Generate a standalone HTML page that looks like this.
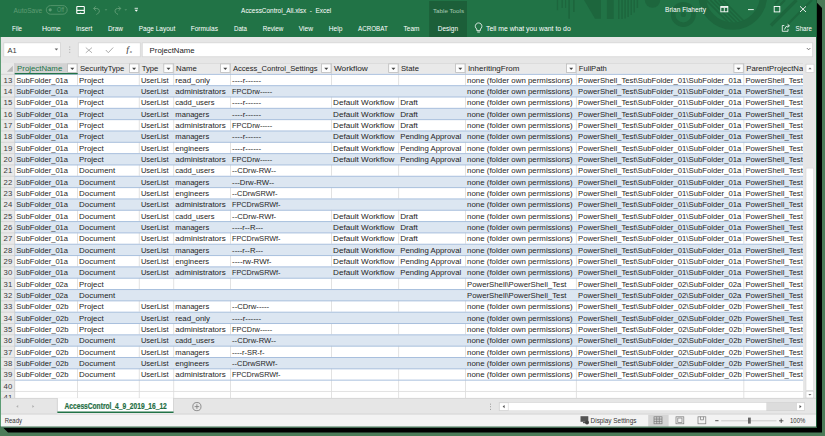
<!DOCTYPE html>
<html><head><meta charset="utf-8"><title>Excel</title>
<style>html,body{margin:0;padding:0;width:825px;height:436px;overflow:hidden;background:#4b7b58}svg{display:block}text{font-family:"Liberation Sans",sans-serif;white-space:pre}</style>
</head><body>
<svg width="825" height="436" viewBox="0 0 825 436">
<rect x="0.00" y="0.00" width="825.00" height="436.00" fill="#4b7b58" />
<polygon points="817,2.7 822,8 822,432.6 8,432.6 3,427.5 817,427.5" fill="#000"/>
<rect x="0.00" y="0.00" width="817.00" height="427.50" fill="#e6e6e6" />
<rect x="0.00" y="0.00" width="816.50" height="37.00" fill="#217346" />
<g fill="#1d663d">
<rect x="556.80" y="0.00" width="1.30" height="10.20" fill="#1d663d" />
<rect x="561.50" y="0.00" width="1.40" height="8.00" fill="#1d663d" />
<rect x="565.00" y="0.00" width="1.10" height="8.00" fill="#1d663d" />
<rect x="568.30" y="0.00" width="1.70" height="18.70" fill="#1d663d" />
<rect x="573.00" y="0.00" width="1.60" height="12.00" fill="#1d663d" />
<rect x="606.90" y="0.00" width="6.80" height="19.00" fill="#1d663d" />
<rect x="618.00" y="0.00" width="1.50" height="19.00" fill="#1d663d" />
<rect x="621.30" y="0.00" width="1.50" height="19.00" fill="#1d663d" />
<rect x="624.40" y="0.00" width="1.50" height="18.50" fill="#1d663d" />
<rect x="627.40" y="0.00" width="1.50" height="17.00" fill="#1d663d" />
<rect x="630.50" y="0.00" width="1.50" height="15.00" fill="#1d663d" />
<rect x="633.50" y="0.00" width="1.50" height="12.50" fill="#1d663d" />
<rect x="636.60" y="0.00" width="1.50" height="8.00" fill="#1d663d" />
<polygon points="584,0 601,0 601,18.7 595,18.7"/>
<path d="M644.8 0 A7.7 7.7 0 0 0 660.2 0z"/>
</g>
<circle cx="683.3" cy="14.5" r="10.2" fill="none" stroke="#1d663d" stroke-width="4.6"/>
<circle cx="683.3" cy="14.5" r="2.6" fill="#1d663d"/>
<path d="M702.2 -4.5 A30.65 30.65 0 0 0 763.5 -4.5" fill="none" stroke="#1d663d" stroke-width="7.3"/>
<defs><clipPath id="arcin"><circle cx="732.9" cy="-4.5" r="27.2"/></clipPath></defs>
<g clip-path="url(#arcin)" stroke="#1d663d" stroke-width="1.6">
<line x1="706.00" y1="0.00" x2="733.00" y2="27.00" stroke="#1d663d" stroke-width="1.6" />
<line x1="710.20" y1="0.00" x2="737.20" y2="27.00" stroke="#1d663d" stroke-width="1.6" />
<line x1="714.40" y1="0.00" x2="741.40" y2="27.00" stroke="#1d663d" stroke-width="1.6" />
<line x1="718.60" y1="0.00" x2="745.60" y2="27.00" stroke="#1d663d" stroke-width="1.6" />
<line x1="722.80" y1="0.00" x2="749.80" y2="27.00" stroke="#1d663d" stroke-width="1.6" />
</g>
<g stroke="#1d663d">
<line x1="796.50" y1="0.00" x2="771.00" y2="25.50" stroke="#1d663d" stroke-width="3.2" />
<line x1="812.00" y1="0.00" x2="787.00" y2="25.00" stroke="#1d663d" stroke-width="2.2" />
<line x1="779.00" y1="0.00" x2="775.00" y2="4.00" stroke="#1d663d" stroke-width="2" />
<line x1="785.00" y1="0.00" x2="780.00" y2="5.00" stroke="#1d663d" stroke-width="2" />
</g>
<text x="13.60" y="13.20" font-size="7.6" fill="#5e9c74" textLength="28.60" lengthAdjust="spacingAndGlyphs" >AutoSave</text>
<rect x="46.30" y="5.60" width="20.90" height="8.60" fill="none" stroke="#5e9c74" stroke-width="0.8" rx="4.3" />
<circle cx="50.2" cy="9.8" r="1.6" fill="#5e9c74"/>
<text x="57.00" y="11.90" font-size="6.6" fill="#5e9c74" textLength="7.00" lengthAdjust="spacingAndGlyphs" >Off</text>
<g fill="none" stroke="#fff" stroke-width="1.1"><rect x="76.8" y="6.5" width="7.5" height="7" rx="0.6"/><path d="M77 10.4 h7.2"/></g><path d="M79.2 13.4 q1.3 -1.6 2.6 0z" fill="#fff"/>
<g fill="none" stroke="#5e9c74" stroke-width="1"><path d="M93.6 8.5 h3.2 a2.6 2.6 0 0 1 1 5 l-1.4 1"/><path d="M95.8 6.3 L93.6 8.5 L95.8 10.7"/><path d="M120.8 8.5 h-3.2 a2.6 2.6 0 0 0 -1 5 l1.4 1"/><path d="M118.6 6.3 L120.8 8.5 L118.6 10.7"/></g>
<path d="M104.6 9.4 h2.8 l-1.4 1.2z M124.4 9.4 h2.8 l-1.4 1.2z" fill="#6aa37f"/>
<path d="M134.6 8.3 h3.4" stroke="#fff" stroke-width="0.8"/><path d="M134.6 9.8 h3.4 l-1.7 2z" fill="#fff"/>
<text x="241.10" y="13.30" font-size="7.6" fill="#fff" textLength="90.20" lengthAdjust="spacingAndGlyphs" >AccessControl_All.xlsx  -  Excel</text>
<rect x="429.20" y="1.00" width="37.80" height="36.00" fill="#1c5f39" />
<text x="433.00" y="12.70" font-size="6.2" fill="#a9cdb5" textLength="31.00" lengthAdjust="spacingAndGlyphs" >Table Tools</text>
<text x="665.00" y="12.30" font-size="7.6" fill="#fff" textLength="41.00" lengthAdjust="spacingAndGlyphs" >Brian Flaherty</text>
<g fill="none" stroke="#fff" stroke-width="0.9"><rect x="720.8" y="6.5" width="7" height="5.3"/><path d="M720.8 7.4 h7 M724.3 8 v3.8"/><path d="M748 9.6 h5.8"/><rect x="774.2" y="6.5" width="5.6" height="5.4"/><path d="M800 6.3 L806 12 M806 6.3 L800 12"/></g>
<text x="12.00" y="30.80" font-size="8.1" fill="#fff" textLength="10.00" lengthAdjust="spacingAndGlyphs" >File</text>
<text x="42.00" y="30.80" font-size="8.1" fill="#fff" textLength="18.70" lengthAdjust="spacingAndGlyphs" >Home</text>
<text x="76.00" y="30.80" font-size="8.1" fill="#fff" textLength="16.30" lengthAdjust="spacingAndGlyphs" >Insert</text>
<text x="108.00" y="30.80" font-size="8.1" fill="#fff" textLength="14.90" lengthAdjust="spacingAndGlyphs" >Draw</text>
<text x="138.70" y="30.80" font-size="8.1" fill="#fff" textLength="36.60" lengthAdjust="spacingAndGlyphs" >Page Layout</text>
<text x="190.70" y="30.80" font-size="8.1" fill="#fff" textLength="27.30" lengthAdjust="spacingAndGlyphs" >Formulas</text>
<text x="234.00" y="30.80" font-size="8.1" fill="#fff" textLength="12.90" lengthAdjust="spacingAndGlyphs" >Data</text>
<text x="262.70" y="30.80" font-size="8.1" fill="#fff" textLength="20.60" lengthAdjust="spacingAndGlyphs" >Review</text>
<text x="298.70" y="30.80" font-size="8.1" fill="#fff" textLength="14.30" lengthAdjust="spacingAndGlyphs" >View</text>
<text x="328.70" y="30.80" font-size="8.1" fill="#fff" textLength="13.70" lengthAdjust="spacingAndGlyphs" >Help</text>
<text x="358.00" y="30.80" font-size="8.1" fill="#fff" textLength="29.70" lengthAdjust="spacingAndGlyphs" >ACROBAT</text>
<text x="403.60" y="30.80" font-size="8.1" fill="#fff" textLength="15.80" lengthAdjust="spacingAndGlyphs" >Team</text>
<text x="437.80" y="30.80" font-size="8.1" fill="#fff" textLength="20.20" lengthAdjust="spacingAndGlyphs" >Design</text>
<text x="486.00" y="30.80" font-size="8.1" fill="#fff" textLength="84.70" lengthAdjust="spacingAndGlyphs" >Tell me what you want to do</text>
<text x="795.60" y="30.80" font-size="8.1" fill="#fff" textLength="16.40" lengthAdjust="spacingAndGlyphs" >Share</text>
<g fill="none" stroke="#fff" stroke-width="0.8"><path d="M476.8 29 a3.3 3.3 0 1 1 3.6 0 v1.6 h-3.6z"/><path d="M477.3 32 h2.6"/></g>
<g fill="none" stroke="#fff" stroke-width="0.8"><path d="M788 29 v2.3 h-5.7 v-5.8 h2"/><path d="M784.5 29.5 q0.5 -3.5 4.5 -3.8 M787.5 24.2 l2 1.6 l-2 1.7"/></g>
<rect x="1.00" y="37.00" width="815.50" height="26.00" fill="#e6e6e6" />
<rect x="3.80" y="42.80" width="56.80" height="14.00" fill="#fff" stroke="#d4d4d4" stroke-width="0.8" />
<text x="7.50" y="52.60" font-size="8" fill="#3a3a3a" textLength="9.20" lengthAdjust="spacingAndGlyphs" >A1</text>
<path d="M54.6 48.6 h3.6 l-1.8 2z" fill="#666"/>
<g fill="#9a9a9a"><rect x="69.3" y="46.6" width="0.9" height="0.9"/><rect x="69.3" y="49.2" width="0.9" height="0.9"/><rect x="69.3" y="51.8" width="0.9" height="0.9"/></g>
<rect x="78.30" y="42.80" width="62.00" height="14.00" fill="#fff" stroke="#d4d4d4" stroke-width="0.8" />
<path d="M85.8 47.6 L92 52.8 M92 47.6 L85.8 52.8" stroke="#a0a0a0" stroke-width="0.8"/>
<path d="M105.8 50 L108.3 52.7 L113.2 47.5" stroke="#a0a0a0" stroke-width="0.9" fill="none"/>
<text x="126.4" y="51.9" font-size="8.2" font-style="italic" fill="#3a3a3a" style="font-family:'Liberation Serif',serif" stroke="#3a3a3a" stroke-width="0.15">f</text><text x="129.7" y="52.6" font-size="5" font-style="italic" fill="#3a3a3a" style="font-family:'Liberation Serif',serif">x</text>
<rect x="142.20" y="42.80" width="670.50" height="14.00" fill="#fff" stroke="#d4d4d4" stroke-width="0.8" />
<text x="149.60" y="52.70" font-size="7.8" fill="#222" textLength="45.00" lengthAdjust="spacingAndGlyphs" >ProjectName</text>
<path d="M806.8 48 L808.6 49.8 L810.4 48" stroke="#555" stroke-width="0.8" fill="none"/>
<defs><clipPath id="gc"><rect x="0" y="63" width="803.4" height="335.1"/></clipPath></defs>
<g clip-path="url(#gc)">
<rect x="1.00" y="63.00" width="802.40" height="335.10" fill="#fff" />
<rect x="1.00" y="63.00" width="13.70" height="335.10" fill="#e9e9e9" />
<rect x="14.70" y="63.00" width="788.70" height="10.85" fill="#e9e9e9" />
<rect x="14.70" y="63.00" width="63.00" height="10.85" fill="#d2d2d2" />
<line x1="14.70" y1="63.40" x2="803.40" y2="63.40" stroke="#d6d6d6" stroke-width="0.8" />
<rect x="14.70" y="85.68" width="788.70" height="11.33" fill="#dce6f1" />
<rect x="14.70" y="108.33" width="788.70" height="11.33" fill="#dce6f1" />
<rect x="14.70" y="130.98" width="788.70" height="11.33" fill="#dce6f1" />
<rect x="14.70" y="153.63" width="788.70" height="11.33" fill="#dce6f1" />
<rect x="14.70" y="176.28" width="788.70" height="11.33" fill="#dce6f1" />
<rect x="14.70" y="198.94" width="788.70" height="11.33" fill="#dce6f1" />
<rect x="14.70" y="221.59" width="788.70" height="11.33" fill="#dce6f1" />
<rect x="14.70" y="244.24" width="788.70" height="11.33" fill="#dce6f1" />
<rect x="14.70" y="266.89" width="788.70" height="11.33" fill="#dce6f1" />
<rect x="14.70" y="289.54" width="788.70" height="11.33" fill="#dce6f1" />
<rect x="14.70" y="312.20" width="788.70" height="11.33" fill="#dce6f1" />
<rect x="14.70" y="334.85" width="788.70" height="11.33" fill="#dce6f1" />
<rect x="14.70" y="357.50" width="788.70" height="11.33" fill="#dce6f1" />
<line x1="77.50" y1="73.85" x2="77.50" y2="85.18" stroke="#dadada" stroke-width="0.8" />
<line x1="139.30" y1="73.85" x2="139.30" y2="85.18" stroke="#dadada" stroke-width="0.8" />
<line x1="173.70" y1="73.85" x2="173.70" y2="85.18" stroke="#dadada" stroke-width="0.8" />
<line x1="230.50" y1="73.85" x2="230.50" y2="85.18" stroke="#dadada" stroke-width="0.8" />
<line x1="331.50" y1="73.85" x2="331.50" y2="85.18" stroke="#dadada" stroke-width="0.8" />
<line x1="398.60" y1="73.85" x2="398.60" y2="85.18" stroke="#dadada" stroke-width="0.8" />
<line x1="465.50" y1="73.85" x2="465.50" y2="85.18" stroke="#dadada" stroke-width="0.8" />
<line x1="576.40" y1="73.85" x2="576.40" y2="85.18" stroke="#dadada" stroke-width="0.8" />
<line x1="743.80" y1="73.85" x2="743.80" y2="85.18" stroke="#dadada" stroke-width="0.8" />
<line x1="77.50" y1="96.50" x2="77.50" y2="107.83" stroke="#dadada" stroke-width="0.8" />
<line x1="139.30" y1="96.50" x2="139.30" y2="107.83" stroke="#dadada" stroke-width="0.8" />
<line x1="173.70" y1="96.50" x2="173.70" y2="107.83" stroke="#dadada" stroke-width="0.8" />
<line x1="230.50" y1="96.50" x2="230.50" y2="107.83" stroke="#dadada" stroke-width="0.8" />
<line x1="331.50" y1="96.50" x2="331.50" y2="107.83" stroke="#dadada" stroke-width="0.8" />
<line x1="398.60" y1="96.50" x2="398.60" y2="107.83" stroke="#dadada" stroke-width="0.8" />
<line x1="465.50" y1="96.50" x2="465.50" y2="107.83" stroke="#dadada" stroke-width="0.8" />
<line x1="576.40" y1="96.50" x2="576.40" y2="107.83" stroke="#dadada" stroke-width="0.8" />
<line x1="743.80" y1="96.50" x2="743.80" y2="107.83" stroke="#dadada" stroke-width="0.8" />
<line x1="77.50" y1="119.15" x2="77.50" y2="130.48" stroke="#dadada" stroke-width="0.8" />
<line x1="139.30" y1="119.15" x2="139.30" y2="130.48" stroke="#dadada" stroke-width="0.8" />
<line x1="173.70" y1="119.15" x2="173.70" y2="130.48" stroke="#dadada" stroke-width="0.8" />
<line x1="230.50" y1="119.15" x2="230.50" y2="130.48" stroke="#dadada" stroke-width="0.8" />
<line x1="331.50" y1="119.15" x2="331.50" y2="130.48" stroke="#dadada" stroke-width="0.8" />
<line x1="398.60" y1="119.15" x2="398.60" y2="130.48" stroke="#dadada" stroke-width="0.8" />
<line x1="465.50" y1="119.15" x2="465.50" y2="130.48" stroke="#dadada" stroke-width="0.8" />
<line x1="576.40" y1="119.15" x2="576.40" y2="130.48" stroke="#dadada" stroke-width="0.8" />
<line x1="743.80" y1="119.15" x2="743.80" y2="130.48" stroke="#dadada" stroke-width="0.8" />
<line x1="77.50" y1="141.81" x2="77.50" y2="153.13" stroke="#dadada" stroke-width="0.8" />
<line x1="139.30" y1="141.81" x2="139.30" y2="153.13" stroke="#dadada" stroke-width="0.8" />
<line x1="173.70" y1="141.81" x2="173.70" y2="153.13" stroke="#dadada" stroke-width="0.8" />
<line x1="230.50" y1="141.81" x2="230.50" y2="153.13" stroke="#dadada" stroke-width="0.8" />
<line x1="331.50" y1="141.81" x2="331.50" y2="153.13" stroke="#dadada" stroke-width="0.8" />
<line x1="398.60" y1="141.81" x2="398.60" y2="153.13" stroke="#dadada" stroke-width="0.8" />
<line x1="465.50" y1="141.81" x2="465.50" y2="153.13" stroke="#dadada" stroke-width="0.8" />
<line x1="576.40" y1="141.81" x2="576.40" y2="153.13" stroke="#dadada" stroke-width="0.8" />
<line x1="743.80" y1="141.81" x2="743.80" y2="153.13" stroke="#dadada" stroke-width="0.8" />
<line x1="77.50" y1="164.46" x2="77.50" y2="175.78" stroke="#dadada" stroke-width="0.8" />
<line x1="139.30" y1="164.46" x2="139.30" y2="175.78" stroke="#dadada" stroke-width="0.8" />
<line x1="173.70" y1="164.46" x2="173.70" y2="175.78" stroke="#dadada" stroke-width="0.8" />
<line x1="230.50" y1="164.46" x2="230.50" y2="175.78" stroke="#dadada" stroke-width="0.8" />
<line x1="331.50" y1="164.46" x2="331.50" y2="175.78" stroke="#dadada" stroke-width="0.8" />
<line x1="398.60" y1="164.46" x2="398.60" y2="175.78" stroke="#dadada" stroke-width="0.8" />
<line x1="465.50" y1="164.46" x2="465.50" y2="175.78" stroke="#dadada" stroke-width="0.8" />
<line x1="576.40" y1="164.46" x2="576.40" y2="175.78" stroke="#dadada" stroke-width="0.8" />
<line x1="743.80" y1="164.46" x2="743.80" y2="175.78" stroke="#dadada" stroke-width="0.8" />
<line x1="77.50" y1="187.11" x2="77.50" y2="198.44" stroke="#dadada" stroke-width="0.8" />
<line x1="139.30" y1="187.11" x2="139.30" y2="198.44" stroke="#dadada" stroke-width="0.8" />
<line x1="173.70" y1="187.11" x2="173.70" y2="198.44" stroke="#dadada" stroke-width="0.8" />
<line x1="230.50" y1="187.11" x2="230.50" y2="198.44" stroke="#dadada" stroke-width="0.8" />
<line x1="331.50" y1="187.11" x2="331.50" y2="198.44" stroke="#dadada" stroke-width="0.8" />
<line x1="398.60" y1="187.11" x2="398.60" y2="198.44" stroke="#dadada" stroke-width="0.8" />
<line x1="465.50" y1="187.11" x2="465.50" y2="198.44" stroke="#dadada" stroke-width="0.8" />
<line x1="576.40" y1="187.11" x2="576.40" y2="198.44" stroke="#dadada" stroke-width="0.8" />
<line x1="743.80" y1="187.11" x2="743.80" y2="198.44" stroke="#dadada" stroke-width="0.8" />
<line x1="77.50" y1="209.76" x2="77.50" y2="221.09" stroke="#dadada" stroke-width="0.8" />
<line x1="139.30" y1="209.76" x2="139.30" y2="221.09" stroke="#dadada" stroke-width="0.8" />
<line x1="173.70" y1="209.76" x2="173.70" y2="221.09" stroke="#dadada" stroke-width="0.8" />
<line x1="230.50" y1="209.76" x2="230.50" y2="221.09" stroke="#dadada" stroke-width="0.8" />
<line x1="331.50" y1="209.76" x2="331.50" y2="221.09" stroke="#dadada" stroke-width="0.8" />
<line x1="398.60" y1="209.76" x2="398.60" y2="221.09" stroke="#dadada" stroke-width="0.8" />
<line x1="465.50" y1="209.76" x2="465.50" y2="221.09" stroke="#dadada" stroke-width="0.8" />
<line x1="576.40" y1="209.76" x2="576.40" y2="221.09" stroke="#dadada" stroke-width="0.8" />
<line x1="743.80" y1="209.76" x2="743.80" y2="221.09" stroke="#dadada" stroke-width="0.8" />
<line x1="77.50" y1="232.41" x2="77.50" y2="243.74" stroke="#dadada" stroke-width="0.8" />
<line x1="139.30" y1="232.41" x2="139.30" y2="243.74" stroke="#dadada" stroke-width="0.8" />
<line x1="173.70" y1="232.41" x2="173.70" y2="243.74" stroke="#dadada" stroke-width="0.8" />
<line x1="230.50" y1="232.41" x2="230.50" y2="243.74" stroke="#dadada" stroke-width="0.8" />
<line x1="331.50" y1="232.41" x2="331.50" y2="243.74" stroke="#dadada" stroke-width="0.8" />
<line x1="398.60" y1="232.41" x2="398.60" y2="243.74" stroke="#dadada" stroke-width="0.8" />
<line x1="465.50" y1="232.41" x2="465.50" y2="243.74" stroke="#dadada" stroke-width="0.8" />
<line x1="576.40" y1="232.41" x2="576.40" y2="243.74" stroke="#dadada" stroke-width="0.8" />
<line x1="743.80" y1="232.41" x2="743.80" y2="243.74" stroke="#dadada" stroke-width="0.8" />
<line x1="77.50" y1="255.07" x2="77.50" y2="266.39" stroke="#dadada" stroke-width="0.8" />
<line x1="139.30" y1="255.07" x2="139.30" y2="266.39" stroke="#dadada" stroke-width="0.8" />
<line x1="173.70" y1="255.07" x2="173.70" y2="266.39" stroke="#dadada" stroke-width="0.8" />
<line x1="230.50" y1="255.07" x2="230.50" y2="266.39" stroke="#dadada" stroke-width="0.8" />
<line x1="331.50" y1="255.07" x2="331.50" y2="266.39" stroke="#dadada" stroke-width="0.8" />
<line x1="398.60" y1="255.07" x2="398.60" y2="266.39" stroke="#dadada" stroke-width="0.8" />
<line x1="465.50" y1="255.07" x2="465.50" y2="266.39" stroke="#dadada" stroke-width="0.8" />
<line x1="576.40" y1="255.07" x2="576.40" y2="266.39" stroke="#dadada" stroke-width="0.8" />
<line x1="743.80" y1="255.07" x2="743.80" y2="266.39" stroke="#dadada" stroke-width="0.8" />
<line x1="77.50" y1="277.72" x2="77.50" y2="289.04" stroke="#dadada" stroke-width="0.8" />
<line x1="139.30" y1="277.72" x2="139.30" y2="289.04" stroke="#dadada" stroke-width="0.8" />
<line x1="173.70" y1="277.72" x2="173.70" y2="289.04" stroke="#dadada" stroke-width="0.8" />
<line x1="230.50" y1="277.72" x2="230.50" y2="289.04" stroke="#dadada" stroke-width="0.8" />
<line x1="331.50" y1="277.72" x2="331.50" y2="289.04" stroke="#dadada" stroke-width="0.8" />
<line x1="398.60" y1="277.72" x2="398.60" y2="289.04" stroke="#dadada" stroke-width="0.8" />
<line x1="465.50" y1="277.72" x2="465.50" y2="289.04" stroke="#dadada" stroke-width="0.8" />
<line x1="576.40" y1="277.72" x2="576.40" y2="289.04" stroke="#dadada" stroke-width="0.8" />
<line x1="743.80" y1="277.72" x2="743.80" y2="289.04" stroke="#dadada" stroke-width="0.8" />
<line x1="77.50" y1="300.37" x2="77.50" y2="311.70" stroke="#dadada" stroke-width="0.8" />
<line x1="139.30" y1="300.37" x2="139.30" y2="311.70" stroke="#dadada" stroke-width="0.8" />
<line x1="173.70" y1="300.37" x2="173.70" y2="311.70" stroke="#dadada" stroke-width="0.8" />
<line x1="230.50" y1="300.37" x2="230.50" y2="311.70" stroke="#dadada" stroke-width="0.8" />
<line x1="331.50" y1="300.37" x2="331.50" y2="311.70" stroke="#dadada" stroke-width="0.8" />
<line x1="398.60" y1="300.37" x2="398.60" y2="311.70" stroke="#dadada" stroke-width="0.8" />
<line x1="465.50" y1="300.37" x2="465.50" y2="311.70" stroke="#dadada" stroke-width="0.8" />
<line x1="576.40" y1="300.37" x2="576.40" y2="311.70" stroke="#dadada" stroke-width="0.8" />
<line x1="743.80" y1="300.37" x2="743.80" y2="311.70" stroke="#dadada" stroke-width="0.8" />
<line x1="77.50" y1="323.02" x2="77.50" y2="334.35" stroke="#dadada" stroke-width="0.8" />
<line x1="139.30" y1="323.02" x2="139.30" y2="334.35" stroke="#dadada" stroke-width="0.8" />
<line x1="173.70" y1="323.02" x2="173.70" y2="334.35" stroke="#dadada" stroke-width="0.8" />
<line x1="230.50" y1="323.02" x2="230.50" y2="334.35" stroke="#dadada" stroke-width="0.8" />
<line x1="331.50" y1="323.02" x2="331.50" y2="334.35" stroke="#dadada" stroke-width="0.8" />
<line x1="398.60" y1="323.02" x2="398.60" y2="334.35" stroke="#dadada" stroke-width="0.8" />
<line x1="465.50" y1="323.02" x2="465.50" y2="334.35" stroke="#dadada" stroke-width="0.8" />
<line x1="576.40" y1="323.02" x2="576.40" y2="334.35" stroke="#dadada" stroke-width="0.8" />
<line x1="743.80" y1="323.02" x2="743.80" y2="334.35" stroke="#dadada" stroke-width="0.8" />
<line x1="77.50" y1="345.67" x2="77.50" y2="357.00" stroke="#dadada" stroke-width="0.8" />
<line x1="139.30" y1="345.67" x2="139.30" y2="357.00" stroke="#dadada" stroke-width="0.8" />
<line x1="173.70" y1="345.67" x2="173.70" y2="357.00" stroke="#dadada" stroke-width="0.8" />
<line x1="230.50" y1="345.67" x2="230.50" y2="357.00" stroke="#dadada" stroke-width="0.8" />
<line x1="331.50" y1="345.67" x2="331.50" y2="357.00" stroke="#dadada" stroke-width="0.8" />
<line x1="398.60" y1="345.67" x2="398.60" y2="357.00" stroke="#dadada" stroke-width="0.8" />
<line x1="465.50" y1="345.67" x2="465.50" y2="357.00" stroke="#dadada" stroke-width="0.8" />
<line x1="576.40" y1="345.67" x2="576.40" y2="357.00" stroke="#dadada" stroke-width="0.8" />
<line x1="743.80" y1="345.67" x2="743.80" y2="357.00" stroke="#dadada" stroke-width="0.8" />
<line x1="77.50" y1="368.33" x2="77.50" y2="379.65" stroke="#dadada" stroke-width="0.8" />
<line x1="139.30" y1="368.33" x2="139.30" y2="379.65" stroke="#dadada" stroke-width="0.8" />
<line x1="173.70" y1="368.33" x2="173.70" y2="379.65" stroke="#dadada" stroke-width="0.8" />
<line x1="230.50" y1="368.33" x2="230.50" y2="379.65" stroke="#dadada" stroke-width="0.8" />
<line x1="331.50" y1="368.33" x2="331.50" y2="379.65" stroke="#dadada" stroke-width="0.8" />
<line x1="398.60" y1="368.33" x2="398.60" y2="379.65" stroke="#dadada" stroke-width="0.8" />
<line x1="465.50" y1="368.33" x2="465.50" y2="379.65" stroke="#dadada" stroke-width="0.8" />
<line x1="576.40" y1="368.33" x2="576.40" y2="379.65" stroke="#dadada" stroke-width="0.8" />
<line x1="743.80" y1="368.33" x2="743.80" y2="379.65" stroke="#dadada" stroke-width="0.8" />
<line x1="77.50" y1="379.65" x2="77.50" y2="390.98" stroke="#dadada" stroke-width="0.8" />
<line x1="139.30" y1="379.65" x2="139.30" y2="390.98" stroke="#dadada" stroke-width="0.8" />
<line x1="173.70" y1="379.65" x2="173.70" y2="390.98" stroke="#dadada" stroke-width="0.8" />
<line x1="230.50" y1="379.65" x2="230.50" y2="390.98" stroke="#dadada" stroke-width="0.8" />
<line x1="331.50" y1="379.65" x2="331.50" y2="390.98" stroke="#dadada" stroke-width="0.8" />
<line x1="398.60" y1="379.65" x2="398.60" y2="390.98" stroke="#dadada" stroke-width="0.8" />
<line x1="465.50" y1="379.65" x2="465.50" y2="390.98" stroke="#dadada" stroke-width="0.8" />
<line x1="576.40" y1="379.65" x2="576.40" y2="390.98" stroke="#dadada" stroke-width="0.8" />
<line x1="743.80" y1="379.65" x2="743.80" y2="390.98" stroke="#dadada" stroke-width="0.8" />
<line x1="77.50" y1="390.98" x2="77.50" y2="402.30" stroke="#dadada" stroke-width="0.8" />
<line x1="139.30" y1="390.98" x2="139.30" y2="402.30" stroke="#dadada" stroke-width="0.8" />
<line x1="173.70" y1="390.98" x2="173.70" y2="402.30" stroke="#dadada" stroke-width="0.8" />
<line x1="230.50" y1="390.98" x2="230.50" y2="402.30" stroke="#dadada" stroke-width="0.8" />
<line x1="331.50" y1="390.98" x2="331.50" y2="402.30" stroke="#dadada" stroke-width="0.8" />
<line x1="398.60" y1="390.98" x2="398.60" y2="402.30" stroke="#dadada" stroke-width="0.8" />
<line x1="465.50" y1="390.98" x2="465.50" y2="402.30" stroke="#dadada" stroke-width="0.8" />
<line x1="576.40" y1="390.98" x2="576.40" y2="402.30" stroke="#dadada" stroke-width="0.8" />
<line x1="743.80" y1="390.98" x2="743.80" y2="402.30" stroke="#dadada" stroke-width="0.8" />
<line x1="77.50" y1="63.00" x2="77.50" y2="73.85" stroke="#d0d0d0" stroke-width="0.8" />
<line x1="139.30" y1="63.00" x2="139.30" y2="73.85" stroke="#d0d0d0" stroke-width="0.8" />
<line x1="173.70" y1="63.00" x2="173.70" y2="73.85" stroke="#d0d0d0" stroke-width="0.8" />
<line x1="230.50" y1="63.00" x2="230.50" y2="73.85" stroke="#d0d0d0" stroke-width="0.8" />
<line x1="331.50" y1="63.00" x2="331.50" y2="73.85" stroke="#d0d0d0" stroke-width="0.8" />
<line x1="398.60" y1="63.00" x2="398.60" y2="73.85" stroke="#d0d0d0" stroke-width="0.8" />
<line x1="465.50" y1="63.00" x2="465.50" y2="73.85" stroke="#d0d0d0" stroke-width="0.8" />
<line x1="576.40" y1="63.00" x2="576.40" y2="73.85" stroke="#d0d0d0" stroke-width="0.8" />
<line x1="743.80" y1="63.00" x2="743.80" y2="73.85" stroke="#d0d0d0" stroke-width="0.8" />
<line x1="14.70" y1="74.35" x2="803.40" y2="74.35" stroke="#a8bfdd" stroke-width="1" />
<line x1="14.70" y1="85.68" x2="803.40" y2="85.68" stroke="#a8bfdd" stroke-width="1" />
<line x1="14.70" y1="97.00" x2="803.40" y2="97.00" stroke="#a8bfdd" stroke-width="1" />
<line x1="14.70" y1="108.33" x2="803.40" y2="108.33" stroke="#a8bfdd" stroke-width="1" />
<line x1="14.70" y1="119.65" x2="803.40" y2="119.65" stroke="#a8bfdd" stroke-width="1" />
<line x1="14.70" y1="130.98" x2="803.40" y2="130.98" stroke="#a8bfdd" stroke-width="1" />
<line x1="14.70" y1="142.31" x2="803.40" y2="142.31" stroke="#a8bfdd" stroke-width="1" />
<line x1="14.70" y1="153.63" x2="803.40" y2="153.63" stroke="#a8bfdd" stroke-width="1" />
<line x1="14.70" y1="164.96" x2="803.40" y2="164.96" stroke="#a8bfdd" stroke-width="1" />
<line x1="14.70" y1="176.28" x2="803.40" y2="176.28" stroke="#a8bfdd" stroke-width="1" />
<line x1="14.70" y1="187.61" x2="803.40" y2="187.61" stroke="#a8bfdd" stroke-width="1" />
<line x1="14.70" y1="198.94" x2="803.40" y2="198.94" stroke="#a8bfdd" stroke-width="1" />
<line x1="14.70" y1="210.26" x2="803.40" y2="210.26" stroke="#a8bfdd" stroke-width="1" />
<line x1="14.70" y1="221.59" x2="803.40" y2="221.59" stroke="#a8bfdd" stroke-width="1" />
<line x1="14.70" y1="232.91" x2="803.40" y2="232.91" stroke="#a8bfdd" stroke-width="1" />
<line x1="14.70" y1="244.24" x2="803.40" y2="244.24" stroke="#a8bfdd" stroke-width="1" />
<line x1="14.70" y1="255.57" x2="803.40" y2="255.57" stroke="#a8bfdd" stroke-width="1" />
<line x1="14.70" y1="266.89" x2="803.40" y2="266.89" stroke="#a8bfdd" stroke-width="1" />
<line x1="14.70" y1="278.22" x2="803.40" y2="278.22" stroke="#a8bfdd" stroke-width="1" />
<line x1="14.70" y1="289.54" x2="803.40" y2="289.54" stroke="#a8bfdd" stroke-width="1" />
<line x1="14.70" y1="300.87" x2="803.40" y2="300.87" stroke="#a8bfdd" stroke-width="1" />
<line x1="14.70" y1="312.20" x2="803.40" y2="312.20" stroke="#a8bfdd" stroke-width="1" />
<line x1="14.70" y1="323.52" x2="803.40" y2="323.52" stroke="#a8bfdd" stroke-width="1" />
<line x1="14.70" y1="334.85" x2="803.40" y2="334.85" stroke="#a8bfdd" stroke-width="1" />
<line x1="14.70" y1="346.17" x2="803.40" y2="346.17" stroke="#a8bfdd" stroke-width="1" />
<line x1="14.70" y1="357.50" x2="803.40" y2="357.50" stroke="#a8bfdd" stroke-width="1" />
<line x1="14.70" y1="368.83" x2="803.40" y2="368.83" stroke="#a8bfdd" stroke-width="1" />
<line x1="14.70" y1="380.15" x2="803.40" y2="380.15" stroke="#a8bfdd" stroke-width="1" />
<line x1="14.70" y1="391.48" x2="803.40" y2="391.48" stroke="#dadada" stroke-width="0.8" />
<line x1="14.70" y1="402.80" x2="803.40" y2="402.80" stroke="#dadada" stroke-width="0.8" />
<line x1="1.00" y1="74.35" x2="14.70" y2="74.35" stroke="#d0d0d0" stroke-width="0.8" />
<line x1="1.00" y1="85.68" x2="14.70" y2="85.68" stroke="#d0d0d0" stroke-width="0.8" />
<line x1="1.00" y1="97.00" x2="14.70" y2="97.00" stroke="#d0d0d0" stroke-width="0.8" />
<line x1="1.00" y1="108.33" x2="14.70" y2="108.33" stroke="#d0d0d0" stroke-width="0.8" />
<line x1="1.00" y1="119.65" x2="14.70" y2="119.65" stroke="#d0d0d0" stroke-width="0.8" />
<line x1="1.00" y1="130.98" x2="14.70" y2="130.98" stroke="#d0d0d0" stroke-width="0.8" />
<line x1="1.00" y1="142.31" x2="14.70" y2="142.31" stroke="#d0d0d0" stroke-width="0.8" />
<line x1="1.00" y1="153.63" x2="14.70" y2="153.63" stroke="#d0d0d0" stroke-width="0.8" />
<line x1="1.00" y1="164.96" x2="14.70" y2="164.96" stroke="#d0d0d0" stroke-width="0.8" />
<line x1="1.00" y1="176.28" x2="14.70" y2="176.28" stroke="#d0d0d0" stroke-width="0.8" />
<line x1="1.00" y1="187.61" x2="14.70" y2="187.61" stroke="#d0d0d0" stroke-width="0.8" />
<line x1="1.00" y1="198.94" x2="14.70" y2="198.94" stroke="#d0d0d0" stroke-width="0.8" />
<line x1="1.00" y1="210.26" x2="14.70" y2="210.26" stroke="#d0d0d0" stroke-width="0.8" />
<line x1="1.00" y1="221.59" x2="14.70" y2="221.59" stroke="#d0d0d0" stroke-width="0.8" />
<line x1="1.00" y1="232.91" x2="14.70" y2="232.91" stroke="#d0d0d0" stroke-width="0.8" />
<line x1="1.00" y1="244.24" x2="14.70" y2="244.24" stroke="#d0d0d0" stroke-width="0.8" />
<line x1="1.00" y1="255.57" x2="14.70" y2="255.57" stroke="#d0d0d0" stroke-width="0.8" />
<line x1="1.00" y1="266.89" x2="14.70" y2="266.89" stroke="#d0d0d0" stroke-width="0.8" />
<line x1="1.00" y1="278.22" x2="14.70" y2="278.22" stroke="#d0d0d0" stroke-width="0.8" />
<line x1="1.00" y1="289.54" x2="14.70" y2="289.54" stroke="#d0d0d0" stroke-width="0.8" />
<line x1="1.00" y1="300.87" x2="14.70" y2="300.87" stroke="#d0d0d0" stroke-width="0.8" />
<line x1="1.00" y1="312.20" x2="14.70" y2="312.20" stroke="#d0d0d0" stroke-width="0.8" />
<line x1="1.00" y1="323.52" x2="14.70" y2="323.52" stroke="#d0d0d0" stroke-width="0.8" />
<line x1="1.00" y1="334.85" x2="14.70" y2="334.85" stroke="#d0d0d0" stroke-width="0.8" />
<line x1="1.00" y1="346.17" x2="14.70" y2="346.17" stroke="#d0d0d0" stroke-width="0.8" />
<line x1="1.00" y1="357.50" x2="14.70" y2="357.50" stroke="#d0d0d0" stroke-width="0.8" />
<line x1="1.00" y1="368.83" x2="14.70" y2="368.83" stroke="#d0d0d0" stroke-width="0.8" />
<line x1="1.00" y1="380.15" x2="14.70" y2="380.15" stroke="#d0d0d0" stroke-width="0.8" />
<line x1="1.00" y1="391.48" x2="14.70" y2="391.48" stroke="#d0d0d0" stroke-width="0.8" />
<line x1="1.00" y1="402.80" x2="14.70" y2="402.80" stroke="#d0d0d0" stroke-width="0.8" />
<line x1="14.70" y1="63.00" x2="14.70" y2="398.10" stroke="#c8c8c8" stroke-width="0.8" />
<line x1="14.70" y1="73.60" x2="77.70" y2="73.60" stroke="#217346" stroke-width="1.3" />
<path d="M6.8 71.8 L12.8 71.8 L12.8 65.7z" fill="#b9b9b9"/>
<text x="17.10" y="71.30" font-size="8.05" fill="#217346" textLength="45.13" lengthAdjust="spacingAndGlyphs" >ProjectName</text>
<rect x="67.60" y="63.90" width="9.40" height="8.60" fill="#fdfdfd" stroke="#bcbcbc" stroke-width="0.8" />
<path d="M70.30 67.8 h4 l-2 2.3z" fill="#444"/>
<text x="79.90" y="71.30" font-size="8.05" fill="#222" textLength="44.49" lengthAdjust="spacingAndGlyphs" >SecurityType</text>
<rect x="129.40" y="63.90" width="9.40" height="8.60" fill="#fdfdfd" stroke="#bcbcbc" stroke-width="0.8" />
<path d="M132.10 67.8 h4 l-2 2.3z" fill="#444"/>
<text x="141.70" y="71.30" font-size="8.05" fill="#222" textLength="16.69" lengthAdjust="spacingAndGlyphs" >Type</text>
<rect x="163.80" y="63.90" width="9.40" height="8.60" fill="#fdfdfd" stroke="#bcbcbc" stroke-width="0.8" />
<path d="M166.50 67.8 h4 l-2 2.3z" fill="#444"/>
<text x="176.10" y="71.30" font-size="8.05" fill="#222" textLength="20.59" lengthAdjust="spacingAndGlyphs" >Name</text>
<rect x="220.60" y="63.90" width="9.40" height="8.60" fill="#fdfdfd" stroke="#bcbcbc" stroke-width="0.8" />
<path d="M223.30 67.8 h4 l-2 2.3z" fill="#444"/>
<text x="232.90" y="71.30" font-size="8.05" fill="#222" textLength="84.74" lengthAdjust="spacingAndGlyphs" >Access_Control_Settings</text>
<rect x="321.60" y="63.90" width="9.40" height="8.60" fill="#fdfdfd" stroke="#bcbcbc" stroke-width="0.8" />
<path d="M324.30 67.8 h4 l-2 2.3z" fill="#444"/>
<text x="333.90" y="71.30" font-size="8.05" fill="#222" textLength="33.97" lengthAdjust="spacingAndGlyphs" >Workflow</text>
<rect x="388.70" y="63.90" width="9.40" height="8.60" fill="#fdfdfd" stroke="#bcbcbc" stroke-width="0.8" />
<path d="M391.40 67.8 h4 l-2 2.3z" fill="#444"/>
<text x="401.00" y="71.30" font-size="8.05" fill="#222" textLength="17.90" lengthAdjust="spacingAndGlyphs" >State</text>
<rect x="455.60" y="63.90" width="9.40" height="8.60" fill="#fdfdfd" stroke="#bcbcbc" stroke-width="0.8" />
<path d="M458.30 67.8 h4 l-2 2.3z" fill="#444"/>
<text x="467.90" y="71.30" font-size="8.05" fill="#222" textLength="51.61" lengthAdjust="spacingAndGlyphs" >InheritingFrom</text>
<rect x="566.50" y="63.90" width="9.40" height="8.60" fill="#fdfdfd" stroke="#bcbcbc" stroke-width="0.8" />
<path d="M569.20 67.8 h4 l-2 2.3z" fill="#444"/>
<text x="578.80" y="71.30" font-size="8.05" fill="#222" textLength="28.03" lengthAdjust="spacingAndGlyphs" >FullPath</text>
<rect x="733.90" y="63.90" width="9.40" height="8.60" fill="#fdfdfd" stroke="#bcbcbc" stroke-width="0.8" />
<path d="M736.60 67.8 h4 l-2 2.3z" fill="#444"/>
<text x="746.20" y="71.30" font-size="8.05" fill="#222" textLength="57.09" lengthAdjust="spacingAndGlyphs" >ParentProjectNa</text>
<text x="16.30" y="82.75" font-size="8.05" fill="#1e1e1e" textLength="51.74" lengthAdjust="spacingAndGlyphs" >SubFolder_01a</text>
<text x="79.10" y="82.75" font-size="8.05" fill="#1e1e1e" textLength="24.55" lengthAdjust="spacingAndGlyphs" >Project</text>
<text x="140.90" y="82.75" font-size="8.05" fill="#1e1e1e" textLength="27.67" lengthAdjust="spacingAndGlyphs" >UserList</text>
<text x="175.30" y="82.75" font-size="8.05" fill="#1e1e1e" textLength="34.71" lengthAdjust="spacingAndGlyphs" >read_only</text>
<text x="232.10" y="82.75" font-size="8.05" fill="#1e1e1e" textLength="28.98" lengthAdjust="spacingAndGlyphs" >----r------</text>
<text x="467.10" y="82.75" font-size="8.05" fill="#1e1e1e" textLength="105.51" lengthAdjust="spacingAndGlyphs" >none (folder own permissions)</text>
<text x="578.00" y="82.75" font-size="8.05" fill="#1e1e1e" textLength="163.39" lengthAdjust="spacingAndGlyphs" >PowerShell_Test\SubFolder_01\SubFolder_01a</text>
<text x="745.40" y="82.75" font-size="8.05" fill="#1e1e1e" textLength="57.42" lengthAdjust="spacingAndGlyphs" >PowerShell_Test</text>
<text x="16.30" y="94.08" font-size="8.05" fill="#1e1e1e" textLength="51.74" lengthAdjust="spacingAndGlyphs" >SubFolder_01a</text>
<text x="79.10" y="94.08" font-size="8.05" fill="#1e1e1e" textLength="24.55" lengthAdjust="spacingAndGlyphs" >Project</text>
<text x="140.90" y="94.08" font-size="8.05" fill="#1e1e1e" textLength="27.67" lengthAdjust="spacingAndGlyphs" >UserList</text>
<text x="175.30" y="94.08" font-size="8.05" fill="#1e1e1e" textLength="50.51" lengthAdjust="spacingAndGlyphs" >administrators</text>
<text x="232.10" y="94.08" font-size="8.05" fill="#1e1e1e" textLength="40.10" lengthAdjust="spacingAndGlyphs" >FPCDrw-----</text>
<text x="467.10" y="94.08" font-size="8.05" fill="#1e1e1e" textLength="105.51" lengthAdjust="spacingAndGlyphs" >none (folder own permissions)</text>
<text x="578.00" y="94.08" font-size="8.05" fill="#1e1e1e" textLength="163.39" lengthAdjust="spacingAndGlyphs" >PowerShell_Test\SubFolder_01\SubFolder_01a</text>
<text x="745.40" y="94.08" font-size="8.05" fill="#1e1e1e" textLength="57.42" lengthAdjust="spacingAndGlyphs" >PowerShell_Test</text>
<text x="16.30" y="105.40" font-size="8.05" fill="#1e1e1e" textLength="51.74" lengthAdjust="spacingAndGlyphs" >SubFolder_01a</text>
<text x="79.10" y="105.40" font-size="8.05" fill="#1e1e1e" textLength="24.55" lengthAdjust="spacingAndGlyphs" >Project</text>
<text x="140.90" y="105.40" font-size="8.05" fill="#1e1e1e" textLength="27.67" lengthAdjust="spacingAndGlyphs" >UserList</text>
<text x="175.30" y="105.40" font-size="8.05" fill="#1e1e1e" textLength="39.13" lengthAdjust="spacingAndGlyphs" >cadd_users</text>
<text x="232.10" y="105.40" font-size="8.05" fill="#1e1e1e" textLength="28.98" lengthAdjust="spacingAndGlyphs" >----r------</text>
<text x="333.10" y="105.40" font-size="8.05" fill="#1e1e1e" textLength="61.28" lengthAdjust="spacingAndGlyphs" >Default Workflow</text>
<text x="400.20" y="105.40" font-size="8.05" fill="#1e1e1e" textLength="17.71" lengthAdjust="spacingAndGlyphs" >Draft</text>
<text x="467.10" y="105.40" font-size="8.05" fill="#1e1e1e" textLength="105.51" lengthAdjust="spacingAndGlyphs" >none (folder own permissions)</text>
<text x="578.00" y="105.40" font-size="8.05" fill="#1e1e1e" textLength="163.39" lengthAdjust="spacingAndGlyphs" >PowerShell_Test\SubFolder_01\SubFolder_01a</text>
<text x="745.40" y="105.40" font-size="8.05" fill="#1e1e1e" textLength="57.42" lengthAdjust="spacingAndGlyphs" >PowerShell_Test</text>
<text x="16.30" y="116.73" font-size="8.05" fill="#1e1e1e" textLength="51.74" lengthAdjust="spacingAndGlyphs" >SubFolder_01a</text>
<text x="79.10" y="116.73" font-size="8.05" fill="#1e1e1e" textLength="24.55" lengthAdjust="spacingAndGlyphs" >Project</text>
<text x="140.90" y="116.73" font-size="8.05" fill="#1e1e1e" textLength="27.67" lengthAdjust="spacingAndGlyphs" >UserList</text>
<text x="175.30" y="116.73" font-size="8.05" fill="#1e1e1e" textLength="33.92" lengthAdjust="spacingAndGlyphs" >managers</text>
<text x="232.10" y="116.73" font-size="8.05" fill="#1e1e1e" textLength="28.98" lengthAdjust="spacingAndGlyphs" >----r------</text>
<text x="333.10" y="116.73" font-size="8.05" fill="#1e1e1e" textLength="61.28" lengthAdjust="spacingAndGlyphs" >Default Workflow</text>
<text x="400.20" y="116.73" font-size="8.05" fill="#1e1e1e" textLength="17.71" lengthAdjust="spacingAndGlyphs" >Draft</text>
<text x="467.10" y="116.73" font-size="8.05" fill="#1e1e1e" textLength="105.51" lengthAdjust="spacingAndGlyphs" >none (folder own permissions)</text>
<text x="578.00" y="116.73" font-size="8.05" fill="#1e1e1e" textLength="163.39" lengthAdjust="spacingAndGlyphs" >PowerShell_Test\SubFolder_01\SubFolder_01a</text>
<text x="745.40" y="116.73" font-size="8.05" fill="#1e1e1e" textLength="57.42" lengthAdjust="spacingAndGlyphs" >PowerShell_Test</text>
<text x="16.30" y="128.05" font-size="8.05" fill="#1e1e1e" textLength="51.74" lengthAdjust="spacingAndGlyphs" >SubFolder_01a</text>
<text x="79.10" y="128.05" font-size="8.05" fill="#1e1e1e" textLength="24.55" lengthAdjust="spacingAndGlyphs" >Project</text>
<text x="140.90" y="128.05" font-size="8.05" fill="#1e1e1e" textLength="27.67" lengthAdjust="spacingAndGlyphs" >UserList</text>
<text x="175.30" y="128.05" font-size="8.05" fill="#1e1e1e" textLength="50.51" lengthAdjust="spacingAndGlyphs" >administrators</text>
<text x="232.10" y="128.05" font-size="8.05" fill="#1e1e1e" textLength="40.10" lengthAdjust="spacingAndGlyphs" >FPCDrw-----</text>
<text x="333.10" y="128.05" font-size="8.05" fill="#1e1e1e" textLength="61.28" lengthAdjust="spacingAndGlyphs" >Default Workflow</text>
<text x="400.20" y="128.05" font-size="8.05" fill="#1e1e1e" textLength="17.71" lengthAdjust="spacingAndGlyphs" >Draft</text>
<text x="467.10" y="128.05" font-size="8.05" fill="#1e1e1e" textLength="105.51" lengthAdjust="spacingAndGlyphs" >none (folder own permissions)</text>
<text x="578.00" y="128.05" font-size="8.05" fill="#1e1e1e" textLength="163.39" lengthAdjust="spacingAndGlyphs" >PowerShell_Test\SubFolder_01\SubFolder_01a</text>
<text x="745.40" y="128.05" font-size="8.05" fill="#1e1e1e" textLength="57.42" lengthAdjust="spacingAndGlyphs" >PowerShell_Test</text>
<text x="16.30" y="139.38" font-size="8.05" fill="#1e1e1e" textLength="51.74" lengthAdjust="spacingAndGlyphs" >SubFolder_01a</text>
<text x="79.10" y="139.38" font-size="8.05" fill="#1e1e1e" textLength="24.55" lengthAdjust="spacingAndGlyphs" >Project</text>
<text x="140.90" y="139.38" font-size="8.05" fill="#1e1e1e" textLength="27.67" lengthAdjust="spacingAndGlyphs" >UserList</text>
<text x="175.30" y="139.38" font-size="8.05" fill="#1e1e1e" textLength="33.92" lengthAdjust="spacingAndGlyphs" >managers</text>
<text x="232.10" y="139.38" font-size="8.05" fill="#1e1e1e" textLength="28.98" lengthAdjust="spacingAndGlyphs" >----r------</text>
<text x="333.10" y="139.38" font-size="8.05" fill="#1e1e1e" textLength="61.28" lengthAdjust="spacingAndGlyphs" >Default Workflow</text>
<text x="400.20" y="139.38" font-size="8.05" fill="#1e1e1e" textLength="61.04" lengthAdjust="spacingAndGlyphs" >Pending Approval</text>
<text x="467.10" y="139.38" font-size="8.05" fill="#1e1e1e" textLength="105.51" lengthAdjust="spacingAndGlyphs" >none (folder own permissions)</text>
<text x="578.00" y="139.38" font-size="8.05" fill="#1e1e1e" textLength="163.39" lengthAdjust="spacingAndGlyphs" >PowerShell_Test\SubFolder_01\SubFolder_01a</text>
<text x="745.40" y="139.38" font-size="8.05" fill="#1e1e1e" textLength="57.42" lengthAdjust="spacingAndGlyphs" >PowerShell_Test</text>
<text x="16.30" y="150.71" font-size="8.05" fill="#1e1e1e" textLength="51.74" lengthAdjust="spacingAndGlyphs" >SubFolder_01a</text>
<text x="79.10" y="150.71" font-size="8.05" fill="#1e1e1e" textLength="24.55" lengthAdjust="spacingAndGlyphs" >Project</text>
<text x="140.90" y="150.71" font-size="8.05" fill="#1e1e1e" textLength="27.67" lengthAdjust="spacingAndGlyphs" >UserList</text>
<text x="175.30" y="150.71" font-size="8.05" fill="#1e1e1e" textLength="33.86" lengthAdjust="spacingAndGlyphs" >engineers</text>
<text x="232.10" y="150.71" font-size="8.05" fill="#1e1e1e" textLength="28.98" lengthAdjust="spacingAndGlyphs" >----r------</text>
<text x="333.10" y="150.71" font-size="8.05" fill="#1e1e1e" textLength="61.28" lengthAdjust="spacingAndGlyphs" >Default Workflow</text>
<text x="400.20" y="150.71" font-size="8.05" fill="#1e1e1e" textLength="61.04" lengthAdjust="spacingAndGlyphs" >Pending Approval</text>
<text x="467.10" y="150.71" font-size="8.05" fill="#1e1e1e" textLength="105.51" lengthAdjust="spacingAndGlyphs" >none (folder own permissions)</text>
<text x="578.00" y="150.71" font-size="8.05" fill="#1e1e1e" textLength="163.39" lengthAdjust="spacingAndGlyphs" >PowerShell_Test\SubFolder_01\SubFolder_01a</text>
<text x="745.40" y="150.71" font-size="8.05" fill="#1e1e1e" textLength="57.42" lengthAdjust="spacingAndGlyphs" >PowerShell_Test</text>
<text x="16.30" y="162.03" font-size="8.05" fill="#1e1e1e" textLength="51.74" lengthAdjust="spacingAndGlyphs" >SubFolder_01a</text>
<text x="79.10" y="162.03" font-size="8.05" fill="#1e1e1e" textLength="24.55" lengthAdjust="spacingAndGlyphs" >Project</text>
<text x="140.90" y="162.03" font-size="8.05" fill="#1e1e1e" textLength="27.67" lengthAdjust="spacingAndGlyphs" >UserList</text>
<text x="175.30" y="162.03" font-size="8.05" fill="#1e1e1e" textLength="50.51" lengthAdjust="spacingAndGlyphs" >administrators</text>
<text x="232.10" y="162.03" font-size="8.05" fill="#1e1e1e" textLength="40.10" lengthAdjust="spacingAndGlyphs" >FPCDrw-----</text>
<text x="333.10" y="162.03" font-size="8.05" fill="#1e1e1e" textLength="61.28" lengthAdjust="spacingAndGlyphs" >Default Workflow</text>
<text x="400.20" y="162.03" font-size="8.05" fill="#1e1e1e" textLength="61.04" lengthAdjust="spacingAndGlyphs" >Pending Approval</text>
<text x="467.10" y="162.03" font-size="8.05" fill="#1e1e1e" textLength="105.51" lengthAdjust="spacingAndGlyphs" >none (folder own permissions)</text>
<text x="578.00" y="162.03" font-size="8.05" fill="#1e1e1e" textLength="163.39" lengthAdjust="spacingAndGlyphs" >PowerShell_Test\SubFolder_01\SubFolder_01a</text>
<text x="745.40" y="162.03" font-size="8.05" fill="#1e1e1e" textLength="57.42" lengthAdjust="spacingAndGlyphs" >PowerShell_Test</text>
<text x="16.30" y="173.36" font-size="8.05" fill="#1e1e1e" textLength="51.74" lengthAdjust="spacingAndGlyphs" >SubFolder_01a</text>
<text x="79.10" y="173.36" font-size="8.05" fill="#1e1e1e" textLength="36.10" lengthAdjust="spacingAndGlyphs" >Document</text>
<text x="140.90" y="173.36" font-size="8.05" fill="#1e1e1e" textLength="27.67" lengthAdjust="spacingAndGlyphs" >UserList</text>
<text x="175.30" y="173.36" font-size="8.05" fill="#1e1e1e" textLength="39.13" lengthAdjust="spacingAndGlyphs" >cadd_users</text>
<text x="232.10" y="173.36" font-size="8.05" fill="#1e1e1e" textLength="43.99" lengthAdjust="spacingAndGlyphs" >--CDrw-RW--</text>
<text x="467.10" y="173.36" font-size="8.05" fill="#1e1e1e" textLength="105.51" lengthAdjust="spacingAndGlyphs" >none (folder own permissions)</text>
<text x="578.00" y="173.36" font-size="8.05" fill="#1e1e1e" textLength="163.39" lengthAdjust="spacingAndGlyphs" >PowerShell_Test\SubFolder_01\SubFolder_01a</text>
<text x="745.40" y="173.36" font-size="8.05" fill="#1e1e1e" textLength="57.42" lengthAdjust="spacingAndGlyphs" >PowerShell_Test</text>
<text x="16.30" y="184.68" font-size="8.05" fill="#1e1e1e" textLength="51.74" lengthAdjust="spacingAndGlyphs" >SubFolder_01a</text>
<text x="79.10" y="184.68" font-size="8.05" fill="#1e1e1e" textLength="36.10" lengthAdjust="spacingAndGlyphs" >Document</text>
<text x="140.90" y="184.68" font-size="8.05" fill="#1e1e1e" textLength="27.67" lengthAdjust="spacingAndGlyphs" >UserList</text>
<text x="175.30" y="184.68" font-size="8.05" fill="#1e1e1e" textLength="33.92" lengthAdjust="spacingAndGlyphs" >managers</text>
<text x="232.10" y="184.68" font-size="8.05" fill="#1e1e1e" textLength="42.06" lengthAdjust="spacingAndGlyphs" >---Drw-RW--</text>
<text x="467.10" y="184.68" font-size="8.05" fill="#1e1e1e" textLength="105.51" lengthAdjust="spacingAndGlyphs" >none (folder own permissions)</text>
<text x="578.00" y="184.68" font-size="8.05" fill="#1e1e1e" textLength="163.39" lengthAdjust="spacingAndGlyphs" >PowerShell_Test\SubFolder_01\SubFolder_01a</text>
<text x="745.40" y="184.68" font-size="8.05" fill="#1e1e1e" textLength="57.42" lengthAdjust="spacingAndGlyphs" >PowerShell_Test</text>
<text x="16.30" y="196.01" font-size="8.05" fill="#1e1e1e" textLength="51.74" lengthAdjust="spacingAndGlyphs" >SubFolder_01a</text>
<text x="79.10" y="196.01" font-size="8.05" fill="#1e1e1e" textLength="36.10" lengthAdjust="spacingAndGlyphs" >Document</text>
<text x="140.90" y="196.01" font-size="8.05" fill="#1e1e1e" textLength="27.67" lengthAdjust="spacingAndGlyphs" >UserList</text>
<text x="175.30" y="196.01" font-size="8.05" fill="#1e1e1e" textLength="33.86" lengthAdjust="spacingAndGlyphs" >engineers</text>
<text x="232.10" y="196.01" font-size="8.05" fill="#1e1e1e" textLength="45.28" lengthAdjust="spacingAndGlyphs" >--CDrwSRWf-</text>
<text x="467.10" y="196.01" font-size="8.05" fill="#1e1e1e" textLength="105.51" lengthAdjust="spacingAndGlyphs" >none (folder own permissions)</text>
<text x="578.00" y="196.01" font-size="8.05" fill="#1e1e1e" textLength="163.39" lengthAdjust="spacingAndGlyphs" >PowerShell_Test\SubFolder_01\SubFolder_01a</text>
<text x="745.40" y="196.01" font-size="8.05" fill="#1e1e1e" textLength="57.42" lengthAdjust="spacingAndGlyphs" >PowerShell_Test</text>
<text x="16.30" y="207.34" font-size="8.05" fill="#1e1e1e" textLength="51.74" lengthAdjust="spacingAndGlyphs" >SubFolder_01a</text>
<text x="79.10" y="207.34" font-size="8.05" fill="#1e1e1e" textLength="36.10" lengthAdjust="spacingAndGlyphs" >Document</text>
<text x="140.90" y="207.34" font-size="8.05" fill="#1e1e1e" textLength="27.67" lengthAdjust="spacingAndGlyphs" >UserList</text>
<text x="175.30" y="207.34" font-size="8.05" fill="#1e1e1e" textLength="50.51" lengthAdjust="spacingAndGlyphs" >administrators</text>
<text x="232.10" y="207.34" font-size="8.05" fill="#1e1e1e" textLength="48.37" lengthAdjust="spacingAndGlyphs" >FPCDrwSRWf-</text>
<text x="467.10" y="207.34" font-size="8.05" fill="#1e1e1e" textLength="105.51" lengthAdjust="spacingAndGlyphs" >none (folder own permissions)</text>
<text x="578.00" y="207.34" font-size="8.05" fill="#1e1e1e" textLength="163.39" lengthAdjust="spacingAndGlyphs" >PowerShell_Test\SubFolder_01\SubFolder_01a</text>
<text x="745.40" y="207.34" font-size="8.05" fill="#1e1e1e" textLength="57.42" lengthAdjust="spacingAndGlyphs" >PowerShell_Test</text>
<text x="16.30" y="218.66" font-size="8.05" fill="#1e1e1e" textLength="51.74" lengthAdjust="spacingAndGlyphs" >SubFolder_01a</text>
<text x="79.10" y="218.66" font-size="8.05" fill="#1e1e1e" textLength="36.10" lengthAdjust="spacingAndGlyphs" >Document</text>
<text x="140.90" y="218.66" font-size="8.05" fill="#1e1e1e" textLength="27.67" lengthAdjust="spacingAndGlyphs" >UserList</text>
<text x="175.30" y="218.66" font-size="8.05" fill="#1e1e1e" textLength="39.13" lengthAdjust="spacingAndGlyphs" >cadd_users</text>
<text x="232.10" y="218.66" font-size="8.05" fill="#1e1e1e" textLength="43.98" lengthAdjust="spacingAndGlyphs" >--CDrw-RWf-</text>
<text x="333.10" y="218.66" font-size="8.05" fill="#1e1e1e" textLength="61.28" lengthAdjust="spacingAndGlyphs" >Default Workflow</text>
<text x="400.20" y="218.66" font-size="8.05" fill="#1e1e1e" textLength="17.71" lengthAdjust="spacingAndGlyphs" >Draft</text>
<text x="467.10" y="218.66" font-size="8.05" fill="#1e1e1e" textLength="105.51" lengthAdjust="spacingAndGlyphs" >none (folder own permissions)</text>
<text x="578.00" y="218.66" font-size="8.05" fill="#1e1e1e" textLength="163.39" lengthAdjust="spacingAndGlyphs" >PowerShell_Test\SubFolder_01\SubFolder_01a</text>
<text x="745.40" y="218.66" font-size="8.05" fill="#1e1e1e" textLength="57.42" lengthAdjust="spacingAndGlyphs" >PowerShell_Test</text>
<text x="16.30" y="229.99" font-size="8.05" fill="#1e1e1e" textLength="51.74" lengthAdjust="spacingAndGlyphs" >SubFolder_01a</text>
<text x="79.10" y="229.99" font-size="8.05" fill="#1e1e1e" textLength="36.10" lengthAdjust="spacingAndGlyphs" >Document</text>
<text x="140.90" y="229.99" font-size="8.05" fill="#1e1e1e" textLength="27.67" lengthAdjust="spacingAndGlyphs" >UserList</text>
<text x="175.30" y="229.99" font-size="8.05" fill="#1e1e1e" textLength="33.92" lengthAdjust="spacingAndGlyphs" >managers</text>
<text x="232.10" y="229.99" font-size="8.05" fill="#1e1e1e" textLength="30.99" lengthAdjust="spacingAndGlyphs" >----r--R---</text>
<text x="333.10" y="229.99" font-size="8.05" fill="#1e1e1e" textLength="61.28" lengthAdjust="spacingAndGlyphs" >Default Workflow</text>
<text x="400.20" y="229.99" font-size="8.05" fill="#1e1e1e" textLength="17.71" lengthAdjust="spacingAndGlyphs" >Draft</text>
<text x="467.10" y="229.99" font-size="8.05" fill="#1e1e1e" textLength="105.51" lengthAdjust="spacingAndGlyphs" >none (folder own permissions)</text>
<text x="578.00" y="229.99" font-size="8.05" fill="#1e1e1e" textLength="163.39" lengthAdjust="spacingAndGlyphs" >PowerShell_Test\SubFolder_01\SubFolder_01a</text>
<text x="745.40" y="229.99" font-size="8.05" fill="#1e1e1e" textLength="57.42" lengthAdjust="spacingAndGlyphs" >PowerShell_Test</text>
<text x="16.30" y="241.31" font-size="8.05" fill="#1e1e1e" textLength="51.74" lengthAdjust="spacingAndGlyphs" >SubFolder_01a</text>
<text x="79.10" y="241.31" font-size="8.05" fill="#1e1e1e" textLength="36.10" lengthAdjust="spacingAndGlyphs" >Document</text>
<text x="140.90" y="241.31" font-size="8.05" fill="#1e1e1e" textLength="27.67" lengthAdjust="spacingAndGlyphs" >UserList</text>
<text x="175.30" y="241.31" font-size="8.05" fill="#1e1e1e" textLength="50.51" lengthAdjust="spacingAndGlyphs" >administrators</text>
<text x="232.10" y="241.31" font-size="8.05" fill="#1e1e1e" textLength="48.37" lengthAdjust="spacingAndGlyphs" >FPCDrwSRWf-</text>
<text x="333.10" y="241.31" font-size="8.05" fill="#1e1e1e" textLength="61.28" lengthAdjust="spacingAndGlyphs" >Default Workflow</text>
<text x="400.20" y="241.31" font-size="8.05" fill="#1e1e1e" textLength="17.71" lengthAdjust="spacingAndGlyphs" >Draft</text>
<text x="467.10" y="241.31" font-size="8.05" fill="#1e1e1e" textLength="105.51" lengthAdjust="spacingAndGlyphs" >none (folder own permissions)</text>
<text x="578.00" y="241.31" font-size="8.05" fill="#1e1e1e" textLength="163.39" lengthAdjust="spacingAndGlyphs" >PowerShell_Test\SubFolder_01\SubFolder_01a</text>
<text x="745.40" y="241.31" font-size="8.05" fill="#1e1e1e" textLength="57.42" lengthAdjust="spacingAndGlyphs" >PowerShell_Test</text>
<text x="16.30" y="252.64" font-size="8.05" fill="#1e1e1e" textLength="51.74" lengthAdjust="spacingAndGlyphs" >SubFolder_01a</text>
<text x="79.10" y="252.64" font-size="8.05" fill="#1e1e1e" textLength="36.10" lengthAdjust="spacingAndGlyphs" >Document</text>
<text x="140.90" y="252.64" font-size="8.05" fill="#1e1e1e" textLength="27.67" lengthAdjust="spacingAndGlyphs" >UserList</text>
<text x="175.30" y="252.64" font-size="8.05" fill="#1e1e1e" textLength="33.92" lengthAdjust="spacingAndGlyphs" >managers</text>
<text x="232.10" y="252.64" font-size="8.05" fill="#1e1e1e" textLength="30.99" lengthAdjust="spacingAndGlyphs" >----r--R---</text>
<text x="333.10" y="252.64" font-size="8.05" fill="#1e1e1e" textLength="61.28" lengthAdjust="spacingAndGlyphs" >Default Workflow</text>
<text x="400.20" y="252.64" font-size="8.05" fill="#1e1e1e" textLength="61.04" lengthAdjust="spacingAndGlyphs" >Pending Approval</text>
<text x="467.10" y="252.64" font-size="8.05" fill="#1e1e1e" textLength="105.51" lengthAdjust="spacingAndGlyphs" >none (folder own permissions)</text>
<text x="578.00" y="252.64" font-size="8.05" fill="#1e1e1e" textLength="163.39" lengthAdjust="spacingAndGlyphs" >PowerShell_Test\SubFolder_01\SubFolder_01a</text>
<text x="745.40" y="252.64" font-size="8.05" fill="#1e1e1e" textLength="57.42" lengthAdjust="spacingAndGlyphs" >PowerShell_Test</text>
<text x="16.30" y="263.97" font-size="8.05" fill="#1e1e1e" textLength="51.74" lengthAdjust="spacingAndGlyphs" >SubFolder_01a</text>
<text x="79.10" y="263.97" font-size="8.05" fill="#1e1e1e" textLength="36.10" lengthAdjust="spacingAndGlyphs" >Document</text>
<text x="140.90" y="263.97" font-size="8.05" fill="#1e1e1e" textLength="27.67" lengthAdjust="spacingAndGlyphs" >UserList</text>
<text x="175.30" y="263.97" font-size="8.05" fill="#1e1e1e" textLength="33.86" lengthAdjust="spacingAndGlyphs" >engineers</text>
<text x="232.10" y="263.97" font-size="8.05" fill="#1e1e1e" textLength="39.42" lengthAdjust="spacingAndGlyphs" >----rw-RWf-</text>
<text x="333.10" y="263.97" font-size="8.05" fill="#1e1e1e" textLength="61.28" lengthAdjust="spacingAndGlyphs" >Default Workflow</text>
<text x="400.20" y="263.97" font-size="8.05" fill="#1e1e1e" textLength="61.04" lengthAdjust="spacingAndGlyphs" >Pending Approval</text>
<text x="467.10" y="263.97" font-size="8.05" fill="#1e1e1e" textLength="105.51" lengthAdjust="spacingAndGlyphs" >none (folder own permissions)</text>
<text x="578.00" y="263.97" font-size="8.05" fill="#1e1e1e" textLength="163.39" lengthAdjust="spacingAndGlyphs" >PowerShell_Test\SubFolder_01\SubFolder_01a</text>
<text x="745.40" y="263.97" font-size="8.05" fill="#1e1e1e" textLength="57.42" lengthAdjust="spacingAndGlyphs" >PowerShell_Test</text>
<text x="16.30" y="275.29" font-size="8.05" fill="#1e1e1e" textLength="51.74" lengthAdjust="spacingAndGlyphs" >SubFolder_01a</text>
<text x="79.10" y="275.29" font-size="8.05" fill="#1e1e1e" textLength="36.10" lengthAdjust="spacingAndGlyphs" >Document</text>
<text x="140.90" y="275.29" font-size="8.05" fill="#1e1e1e" textLength="27.67" lengthAdjust="spacingAndGlyphs" >UserList</text>
<text x="175.30" y="275.29" font-size="8.05" fill="#1e1e1e" textLength="50.51" lengthAdjust="spacingAndGlyphs" >administrators</text>
<text x="232.10" y="275.29" font-size="8.05" fill="#1e1e1e" textLength="48.37" lengthAdjust="spacingAndGlyphs" >FPCDrwSRWf-</text>
<text x="333.10" y="275.29" font-size="8.05" fill="#1e1e1e" textLength="61.28" lengthAdjust="spacingAndGlyphs" >Default Workflow</text>
<text x="400.20" y="275.29" font-size="8.05" fill="#1e1e1e" textLength="61.04" lengthAdjust="spacingAndGlyphs" >Pending Approval</text>
<text x="467.10" y="275.29" font-size="8.05" fill="#1e1e1e" textLength="105.51" lengthAdjust="spacingAndGlyphs" >none (folder own permissions)</text>
<text x="578.00" y="275.29" font-size="8.05" fill="#1e1e1e" textLength="163.39" lengthAdjust="spacingAndGlyphs" >PowerShell_Test\SubFolder_01\SubFolder_01a</text>
<text x="745.40" y="275.29" font-size="8.05" fill="#1e1e1e" textLength="57.42" lengthAdjust="spacingAndGlyphs" >PowerShell_Test</text>
<text x="16.30" y="286.62" font-size="8.05" fill="#1e1e1e" textLength="51.74" lengthAdjust="spacingAndGlyphs" >SubFolder_02a</text>
<text x="79.10" y="286.62" font-size="8.05" fill="#1e1e1e" textLength="24.55" lengthAdjust="spacingAndGlyphs" >Project</text>
<text x="467.10" y="286.62" font-size="8.05" fill="#1e1e1e" textLength="99.34" lengthAdjust="spacingAndGlyphs" >PowerShell\PowerShell_Test</text>
<text x="578.00" y="286.62" font-size="8.05" fill="#1e1e1e" textLength="163.39" lengthAdjust="spacingAndGlyphs" >PowerShell_Test\SubFolder_02\SubFolder_02a</text>
<text x="745.40" y="286.62" font-size="8.05" fill="#1e1e1e" textLength="57.42" lengthAdjust="spacingAndGlyphs" >PowerShell_Test</text>
<text x="16.30" y="297.94" font-size="8.05" fill="#1e1e1e" textLength="51.74" lengthAdjust="spacingAndGlyphs" >SubFolder_02a</text>
<text x="79.10" y="297.94" font-size="8.05" fill="#1e1e1e" textLength="36.10" lengthAdjust="spacingAndGlyphs" >Document</text>
<text x="467.10" y="297.94" font-size="8.05" fill="#1e1e1e" textLength="99.34" lengthAdjust="spacingAndGlyphs" >PowerShell\PowerShell_Test</text>
<text x="578.00" y="297.94" font-size="8.05" fill="#1e1e1e" textLength="163.39" lengthAdjust="spacingAndGlyphs" >PowerShell_Test\SubFolder_02\SubFolder_02a</text>
<text x="745.40" y="297.94" font-size="8.05" fill="#1e1e1e" textLength="57.42" lengthAdjust="spacingAndGlyphs" >PowerShell_Test</text>
<text x="16.30" y="309.27" font-size="8.05" fill="#1e1e1e" textLength="52.13" lengthAdjust="spacingAndGlyphs" >SubFolder_02b</text>
<text x="79.10" y="309.27" font-size="8.05" fill="#1e1e1e" textLength="24.55" lengthAdjust="spacingAndGlyphs" >Project</text>
<text x="140.90" y="309.27" font-size="8.05" fill="#1e1e1e" textLength="27.67" lengthAdjust="spacingAndGlyphs" >UserList</text>
<text x="175.30" y="309.27" font-size="8.05" fill="#1e1e1e" textLength="33.92" lengthAdjust="spacingAndGlyphs" >managers</text>
<text x="232.10" y="309.27" font-size="8.05" fill="#1e1e1e" textLength="37.01" lengthAdjust="spacingAndGlyphs" >--CDrw-----</text>
<text x="467.10" y="309.27" font-size="8.05" fill="#1e1e1e" textLength="105.51" lengthAdjust="spacingAndGlyphs" >none (folder own permissions)</text>
<text x="578.00" y="309.27" font-size="8.05" fill="#1e1e1e" textLength="163.78" lengthAdjust="spacingAndGlyphs" >PowerShell_Test\SubFolder_02\SubFolder_02b</text>
<text x="745.40" y="309.27" font-size="8.05" fill="#1e1e1e" textLength="57.42" lengthAdjust="spacingAndGlyphs" >PowerShell_Test</text>
<text x="16.30" y="320.60" font-size="8.05" fill="#1e1e1e" textLength="52.13" lengthAdjust="spacingAndGlyphs" >SubFolder_02b</text>
<text x="79.10" y="320.60" font-size="8.05" fill="#1e1e1e" textLength="24.55" lengthAdjust="spacingAndGlyphs" >Project</text>
<text x="140.90" y="320.60" font-size="8.05" fill="#1e1e1e" textLength="27.67" lengthAdjust="spacingAndGlyphs" >UserList</text>
<text x="175.30" y="320.60" font-size="8.05" fill="#1e1e1e" textLength="34.71" lengthAdjust="spacingAndGlyphs" >read_only</text>
<text x="232.10" y="320.60" font-size="8.05" fill="#1e1e1e" textLength="28.98" lengthAdjust="spacingAndGlyphs" >----r------</text>
<text x="467.10" y="320.60" font-size="8.05" fill="#1e1e1e" textLength="105.51" lengthAdjust="spacingAndGlyphs" >none (folder own permissions)</text>
<text x="578.00" y="320.60" font-size="8.05" fill="#1e1e1e" textLength="163.78" lengthAdjust="spacingAndGlyphs" >PowerShell_Test\SubFolder_02\SubFolder_02b</text>
<text x="745.40" y="320.60" font-size="8.05" fill="#1e1e1e" textLength="57.42" lengthAdjust="spacingAndGlyphs" >PowerShell_Test</text>
<text x="16.30" y="331.92" font-size="8.05" fill="#1e1e1e" textLength="52.13" lengthAdjust="spacingAndGlyphs" >SubFolder_02b</text>
<text x="79.10" y="331.92" font-size="8.05" fill="#1e1e1e" textLength="24.55" lengthAdjust="spacingAndGlyphs" >Project</text>
<text x="140.90" y="331.92" font-size="8.05" fill="#1e1e1e" textLength="27.67" lengthAdjust="spacingAndGlyphs" >UserList</text>
<text x="175.30" y="331.92" font-size="8.05" fill="#1e1e1e" textLength="50.51" lengthAdjust="spacingAndGlyphs" >administrators</text>
<text x="232.10" y="331.92" font-size="8.05" fill="#1e1e1e" textLength="40.10" lengthAdjust="spacingAndGlyphs" >FPCDrw-----</text>
<text x="467.10" y="331.92" font-size="8.05" fill="#1e1e1e" textLength="105.51" lengthAdjust="spacingAndGlyphs" >none (folder own permissions)</text>
<text x="578.00" y="331.92" font-size="8.05" fill="#1e1e1e" textLength="163.78" lengthAdjust="spacingAndGlyphs" >PowerShell_Test\SubFolder_02\SubFolder_02b</text>
<text x="745.40" y="331.92" font-size="8.05" fill="#1e1e1e" textLength="57.42" lengthAdjust="spacingAndGlyphs" >PowerShell_Test</text>
<text x="16.30" y="343.25" font-size="8.05" fill="#1e1e1e" textLength="52.13" lengthAdjust="spacingAndGlyphs" >SubFolder_02b</text>
<text x="79.10" y="343.25" font-size="8.05" fill="#1e1e1e" textLength="36.10" lengthAdjust="spacingAndGlyphs" >Document</text>
<text x="140.90" y="343.25" font-size="8.05" fill="#1e1e1e" textLength="27.67" lengthAdjust="spacingAndGlyphs" >UserList</text>
<text x="175.30" y="343.25" font-size="8.05" fill="#1e1e1e" textLength="39.13" lengthAdjust="spacingAndGlyphs" >cadd_users</text>
<text x="232.10" y="343.25" font-size="8.05" fill="#1e1e1e" textLength="43.99" lengthAdjust="spacingAndGlyphs" >--CDrw-RW--</text>
<text x="467.10" y="343.25" font-size="8.05" fill="#1e1e1e" textLength="105.51" lengthAdjust="spacingAndGlyphs" >none (folder own permissions)</text>
<text x="578.00" y="343.25" font-size="8.05" fill="#1e1e1e" textLength="163.78" lengthAdjust="spacingAndGlyphs" >PowerShell_Test\SubFolder_02\SubFolder_02b</text>
<text x="745.40" y="343.25" font-size="8.05" fill="#1e1e1e" textLength="57.42" lengthAdjust="spacingAndGlyphs" >PowerShell_Test</text>
<text x="16.30" y="354.57" font-size="8.05" fill="#1e1e1e" textLength="52.13" lengthAdjust="spacingAndGlyphs" >SubFolder_02b</text>
<text x="79.10" y="354.57" font-size="8.05" fill="#1e1e1e" textLength="36.10" lengthAdjust="spacingAndGlyphs" >Document</text>
<text x="140.90" y="354.57" font-size="8.05" fill="#1e1e1e" textLength="27.67" lengthAdjust="spacingAndGlyphs" >UserList</text>
<text x="175.30" y="354.57" font-size="8.05" fill="#1e1e1e" textLength="33.92" lengthAdjust="spacingAndGlyphs" >managers</text>
<text x="232.10" y="354.57" font-size="8.05" fill="#1e1e1e" textLength="32.28" lengthAdjust="spacingAndGlyphs" >----r-SR-f-</text>
<text x="467.10" y="354.57" font-size="8.05" fill="#1e1e1e" textLength="105.51" lengthAdjust="spacingAndGlyphs" >none (folder own permissions)</text>
<text x="578.00" y="354.57" font-size="8.05" fill="#1e1e1e" textLength="163.78" lengthAdjust="spacingAndGlyphs" >PowerShell_Test\SubFolder_02\SubFolder_02b</text>
<text x="745.40" y="354.57" font-size="8.05" fill="#1e1e1e" textLength="57.42" lengthAdjust="spacingAndGlyphs" >PowerShell_Test</text>
<text x="16.30" y="365.90" font-size="8.05" fill="#1e1e1e" textLength="52.13" lengthAdjust="spacingAndGlyphs" >SubFolder_02b</text>
<text x="79.10" y="365.90" font-size="8.05" fill="#1e1e1e" textLength="36.10" lengthAdjust="spacingAndGlyphs" >Document</text>
<text x="140.90" y="365.90" font-size="8.05" fill="#1e1e1e" textLength="27.67" lengthAdjust="spacingAndGlyphs" >UserList</text>
<text x="175.30" y="365.90" font-size="8.05" fill="#1e1e1e" textLength="33.86" lengthAdjust="spacingAndGlyphs" >engineers</text>
<text x="232.10" y="365.90" font-size="8.05" fill="#1e1e1e" textLength="45.28" lengthAdjust="spacingAndGlyphs" >--CDrwSRWf-</text>
<text x="467.10" y="365.90" font-size="8.05" fill="#1e1e1e" textLength="105.51" lengthAdjust="spacingAndGlyphs" >none (folder own permissions)</text>
<text x="578.00" y="365.90" font-size="8.05" fill="#1e1e1e" textLength="163.78" lengthAdjust="spacingAndGlyphs" >PowerShell_Test\SubFolder_02\SubFolder_02b</text>
<text x="745.40" y="365.90" font-size="8.05" fill="#1e1e1e" textLength="57.42" lengthAdjust="spacingAndGlyphs" >PowerShell_Test</text>
<text x="16.30" y="377.23" font-size="8.05" fill="#1e1e1e" textLength="52.13" lengthAdjust="spacingAndGlyphs" >SubFolder_02b</text>
<text x="79.10" y="377.23" font-size="8.05" fill="#1e1e1e" textLength="36.10" lengthAdjust="spacingAndGlyphs" >Document</text>
<text x="140.90" y="377.23" font-size="8.05" fill="#1e1e1e" textLength="27.67" lengthAdjust="spacingAndGlyphs" >UserList</text>
<text x="175.30" y="377.23" font-size="8.05" fill="#1e1e1e" textLength="50.51" lengthAdjust="spacingAndGlyphs" >administrators</text>
<text x="232.10" y="377.23" font-size="8.05" fill="#1e1e1e" textLength="48.37" lengthAdjust="spacingAndGlyphs" >FPCDrwSRWf-</text>
<text x="467.10" y="377.23" font-size="8.05" fill="#1e1e1e" textLength="105.51" lengthAdjust="spacingAndGlyphs" >none (folder own permissions)</text>
<text x="578.00" y="377.23" font-size="8.05" fill="#1e1e1e" textLength="163.78" lengthAdjust="spacingAndGlyphs" >PowerShell_Test\SubFolder_02\SubFolder_02b</text>
<text x="745.40" y="377.23" font-size="8.05" fill="#1e1e1e" textLength="57.42" lengthAdjust="spacingAndGlyphs" >PowerShell_Test</text>
<text x="7.90" y="82.75" font-size="8.05" fill="#3c3c3c" textLength="8.62" lengthAdjust="spacingAndGlyphs" text-anchor="middle" >13</text>
<text x="7.90" y="94.08" font-size="8.05" fill="#3c3c3c" textLength="8.62" lengthAdjust="spacingAndGlyphs" text-anchor="middle" >14</text>
<text x="7.90" y="105.40" font-size="8.05" fill="#3c3c3c" textLength="8.62" lengthAdjust="spacingAndGlyphs" text-anchor="middle" >15</text>
<text x="7.90" y="116.73" font-size="8.05" fill="#3c3c3c" textLength="8.62" lengthAdjust="spacingAndGlyphs" text-anchor="middle" >16</text>
<text x="7.90" y="128.05" font-size="8.05" fill="#3c3c3c" textLength="8.62" lengthAdjust="spacingAndGlyphs" text-anchor="middle" >17</text>
<text x="7.90" y="139.38" font-size="8.05" fill="#3c3c3c" textLength="8.62" lengthAdjust="spacingAndGlyphs" text-anchor="middle" >18</text>
<text x="7.90" y="150.71" font-size="8.05" fill="#3c3c3c" textLength="8.62" lengthAdjust="spacingAndGlyphs" text-anchor="middle" >19</text>
<text x="7.90" y="162.03" font-size="8.05" fill="#3c3c3c" textLength="8.62" lengthAdjust="spacingAndGlyphs" text-anchor="middle" >20</text>
<text x="7.90" y="173.36" font-size="8.05" fill="#3c3c3c" textLength="8.62" lengthAdjust="spacingAndGlyphs" text-anchor="middle" >21</text>
<text x="7.90" y="184.68" font-size="8.05" fill="#3c3c3c" textLength="8.62" lengthAdjust="spacingAndGlyphs" text-anchor="middle" >22</text>
<text x="7.90" y="196.01" font-size="8.05" fill="#3c3c3c" textLength="8.62" lengthAdjust="spacingAndGlyphs" text-anchor="middle" >23</text>
<text x="7.90" y="207.34" font-size="8.05" fill="#3c3c3c" textLength="8.62" lengthAdjust="spacingAndGlyphs" text-anchor="middle" >24</text>
<text x="7.90" y="218.66" font-size="8.05" fill="#3c3c3c" textLength="8.62" lengthAdjust="spacingAndGlyphs" text-anchor="middle" >25</text>
<text x="7.90" y="229.99" font-size="8.05" fill="#3c3c3c" textLength="8.62" lengthAdjust="spacingAndGlyphs" text-anchor="middle" >26</text>
<text x="7.90" y="241.31" font-size="8.05" fill="#3c3c3c" textLength="8.62" lengthAdjust="spacingAndGlyphs" text-anchor="middle" >27</text>
<text x="7.90" y="252.64" font-size="8.05" fill="#3c3c3c" textLength="8.62" lengthAdjust="spacingAndGlyphs" text-anchor="middle" >28</text>
<text x="7.90" y="263.97" font-size="8.05" fill="#3c3c3c" textLength="8.62" lengthAdjust="spacingAndGlyphs" text-anchor="middle" >29</text>
<text x="7.90" y="275.29" font-size="8.05" fill="#3c3c3c" textLength="8.62" lengthAdjust="spacingAndGlyphs" text-anchor="middle" >30</text>
<text x="7.90" y="286.62" font-size="8.05" fill="#3c3c3c" textLength="8.62" lengthAdjust="spacingAndGlyphs" text-anchor="middle" >31</text>
<text x="7.90" y="297.94" font-size="8.05" fill="#3c3c3c" textLength="8.62" lengthAdjust="spacingAndGlyphs" text-anchor="middle" >32</text>
<text x="7.90" y="309.27" font-size="8.05" fill="#3c3c3c" textLength="8.62" lengthAdjust="spacingAndGlyphs" text-anchor="middle" >33</text>
<text x="7.90" y="320.60" font-size="8.05" fill="#3c3c3c" textLength="8.62" lengthAdjust="spacingAndGlyphs" text-anchor="middle" >34</text>
<text x="7.90" y="331.92" font-size="8.05" fill="#3c3c3c" textLength="8.62" lengthAdjust="spacingAndGlyphs" text-anchor="middle" >35</text>
<text x="7.90" y="343.25" font-size="8.05" fill="#3c3c3c" textLength="8.62" lengthAdjust="spacingAndGlyphs" text-anchor="middle" >36</text>
<text x="7.90" y="354.57" font-size="8.05" fill="#3c3c3c" textLength="8.62" lengthAdjust="spacingAndGlyphs" text-anchor="middle" >37</text>
<text x="7.90" y="365.90" font-size="8.05" fill="#3c3c3c" textLength="8.62" lengthAdjust="spacingAndGlyphs" text-anchor="middle" >38</text>
<text x="7.90" y="377.23" font-size="8.05" fill="#3c3c3c" textLength="8.62" lengthAdjust="spacingAndGlyphs" text-anchor="middle" >39</text>
<text x="7.90" y="388.55" font-size="8.05" fill="#3c3c3c" textLength="8.62" lengthAdjust="spacingAndGlyphs" text-anchor="middle" >40</text>
<text x="7.90" y="399.88" font-size="8.05" fill="#3c3c3c" textLength="8.62" lengthAdjust="spacingAndGlyphs" text-anchor="middle" >41</text>
<text x="7.90" y="411.20" font-size="8.05" fill="#3c3c3c" textLength="8.62" lengthAdjust="spacingAndGlyphs" text-anchor="middle" >42</text>
<text x="7.90" y="71.00" font-size="8" fill="#000" ></text>
</g>
<rect x="803.40" y="63.00" width="13.10" height="335.10" fill="#e6e6e6" />
<rect x="806.00" y="64.20" width="8.00" height="8.30" fill="#fff" stroke="#d0d0d0" stroke-width="0.7" />
<path d="M808.4 69.2 h3.2 l-1.6 -1.6z" fill="#666"/>
<rect x="806.00" y="168.10" width="7.70" height="222.30" fill="#fff" stroke="#d6d6d6" stroke-width="0.6" />
<rect x="806.00" y="391.20" width="7.70" height="6.90" fill="#fff" stroke="#d0d0d0" stroke-width="0.7" />
<path d="M808.3 394 h3.2 l-1.6 1.6z" fill="#666"/>
<rect x="1.00" y="398.10" width="815.50" height="17.90" fill="#e6e6e6" />
<line x1="1.00" y1="398.40" x2="816.50" y2="398.40" stroke="#d0d0d0" stroke-width="0.7" />
<path d="M18.2 405 v2.8 l-2 -1.4z M32.3 405 v2.8 l2 -1.4z" fill="#b0b0b0"/>
<rect x="57.40" y="398.10" width="116.10" height="15.70" fill="#fff" />
<line x1="57.40" y1="398.10" x2="57.40" y2="413.00" stroke="#c8c8c8" stroke-width="0.7" />
<line x1="173.50" y1="398.10" x2="173.50" y2="413.00" stroke="#c8c8c8" stroke-width="0.7" />
<line x1="57.40" y1="412.30" x2="173.50" y2="412.30" stroke="#217346" stroke-width="1.4" />
<text x="64.50" y="409.00" font-size="8.5" fill="#1e6e42" font-weight="bold" textLength="102.30" lengthAdjust="spacingAndGlyphs" stroke="#1e6e42" stroke-width="0.2">AccessControl_4_9_2019_16_12</text>
<circle cx="196.9" cy="406.6" r="4.1" fill="none" stroke="#777" stroke-width="0.8"/><path d="M194.6 406.6 h4.6 M196.9 404.3 v4.6" stroke="#777" stroke-width="0.8"/>
<g fill="#8a8a8a"><rect x="490" y="403.7" width="0.9" height="0.9"/><rect x="490" y="406.3" width="0.9" height="0.9"/><rect x="490" y="408.9" width="0.9" height="0.9"/></g>
<rect x="499.20" y="402.60" width="305.30" height="8.10" fill="#dcdcdc" stroke="#cfcfcf" stroke-width="0.6" />
<rect x="499.40" y="402.80" width="8.80" height="7.70" fill="#fff" stroke="#cfcfcf" stroke-width="0.6" />
<path d="M502.6 406.6 l2 -1.6 v3.2z" fill="#555"/>
<rect x="508.60" y="402.80" width="257.70" height="7.70" fill="#fff" />
<rect x="796.50" y="402.80" width="8.00" height="7.70" fill="#fff" stroke="#cfcfcf" stroke-width="0.6" />
<path d="M801.5 406.6 l-2 -1.6 v3.2z" fill="#555"/>
<rect x="1.00" y="414.30" width="815.50" height="12.50" fill="#f3f3f3" />
<line x1="1.00" y1="414.00" x2="816.50" y2="414.00" stroke="#d6d6d6" stroke-width="1" />
<text x="4.70" y="422.80" font-size="8" fill="#333" textLength="17.30" lengthAdjust="spacingAndGlyphs" >Ready</text>
<g fill="#555"><rect x="580.5" y="416.2" width="7.8" height="5.6"/><rect x="583" y="422" width="3" height="1.2"/></g><circle cx="587" cy="422.5" r="2" fill="#444"/>
<text x="590.60" y="423.00" font-size="8" fill="#333" textLength="45.80" lengthAdjust="spacingAndGlyphs" >Display Settings</text>
<rect x="648.20" y="414.80" width="20.40" height="11.80" fill="#d5d5d5" />
<g fill="none" stroke="#777" stroke-width="0.7"><rect x="654" y="416.8" width="8" height="7"/><path d="M654 419.1 h8 M654 421.4 h8 M656.7 416.8 v7 M659.3 416.8 v7"/><rect x="676" y="416.8" width="7.8" height="7"/><rect x="677.8" y="418" width="4.2" height="4.6"/><rect x="698" y="416.8" width="7.8" height="7"/><path d="M700.5 416.8 v3 h3 v-3"/></g>
<line x1="715.20" y1="420.70" x2="718.50" y2="420.70" stroke="#444" stroke-width="0.9" />
<line x1="721.20" y1="420.80" x2="776.50" y2="420.80" stroke="#c6c6c6" stroke-width="0.9" />
<rect x="748.00" y="417.60" width="2.80" height="6.00" fill="#666" />
<path d="M779 420.8 h4.4 M781.2 418.6 v4.4" stroke="#444" stroke-width="0.9"/>
<text x="790.00" y="423.00" font-size="8" fill="#333" textLength="15.30" lengthAdjust="spacingAndGlyphs" >100%</text>
<line x1="0.50" y1="37.00" x2="0.50" y2="427.50" stroke="#5c9c74" stroke-width="1" />
<line x1="0.00" y1="427.10" x2="817.00" y2="427.10" stroke="#1e5a36" stroke-width="1" />
<line x1="816.50" y1="37.00" x2="816.50" y2="427.50" stroke="#1e5a36" stroke-width="1" />
<line x1="816.50" y1="0.00" x2="816.50" y2="37.00" stroke="#1b5e37" stroke-width="1" />
</svg>
</body></html>
